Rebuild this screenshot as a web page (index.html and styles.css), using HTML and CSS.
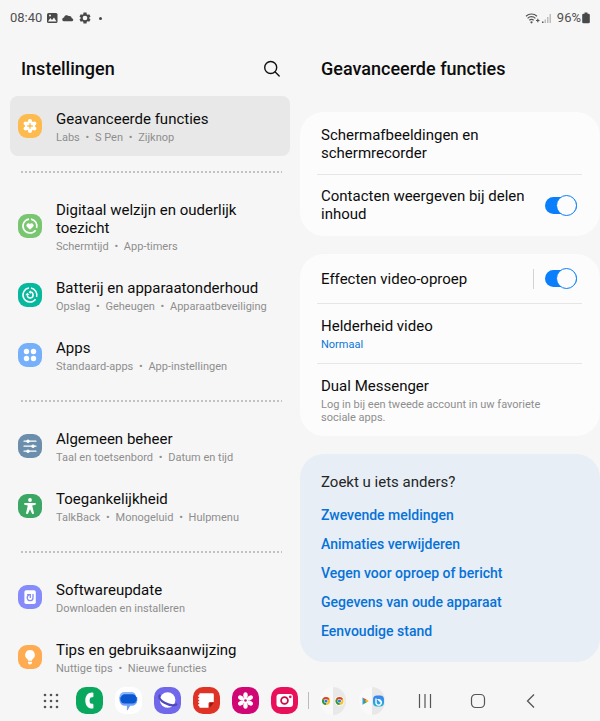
FILE: index.html
```html
<!DOCTYPE html>
<html lang="nl">
<head>
<meta charset="utf-8">
<meta name="viewport" content="width=device-width, initial-scale=1">
<title>Instellingen</title>
<link rel="stylesheet" href="styles.css">
</head>
<body>
<div class="screen">
  <header class="status">
    <span>08:40</span>
    <svg class="status-icon" viewBox="0 0 12 12" width="12" height="12" aria-hidden="true"><rect x="1" y="1" width="10.500" height="10" rx="1.500" fill="#484848"/><path d="M2 9.500 4.300 6l1.700 2 2-2.600 2.500 4.100z" fill="#f6f6f6"/><circle cx="4" cy="3.600" r="1" fill="#f6f6f6"/></svg>
    <svg class="status-icon" viewBox="0 0 12 12" width="12" height="12" aria-hidden="true"><path d="M2.200 9.300a1.900 1.900 0 0 1-.1-3.800A2.600 2.600 0 0 1 6.600 4a2.700 2.700 0 0 1 3.200 2.200 1.600 1.600 0 0 1 .4 3.100z" fill="#484848"/></svg>
    <svg class="status-icon" viewBox="0 0 24 24" width="14" height="14" aria-hidden="true"><path fill="#484848" fill-rule="evenodd" d="M19.400 13a7.500 7.500 0 0 0 0-2l2.100-1.600-2.300-4-2.500 1a7.500 7.500 0 0 0-1.700-1L14.600 2.500H9.400L9 5.400a7.500 7.500 0 0 0-1.700 1l-2.500-1-2.300 4L4.600 11a7.500 7.500 0 0 0 0 2l-2.100 1.600 2.300 4 2.500-1a7.500 7.500 0 0 0 1.700 1l.4 2.900h5.200l.4-2.900a7.500 7.500 0 0 0 1.700-1l2.500 1 2.300-4zM12 16a4 4 0 1 1 0-8 4 4 0 0 1 0 8z"/></svg>
    <span class="status-dot"></span>
    <span class="status-right">
      <svg viewBox="0 0 15 12" width="15" height="12" aria-hidden="true"><g fill="none" stroke="#555" stroke-width="1.200"><path d="M1 4.200a8 8 0 0 1 11 0"/><path d="M2.600 6.300a5.500 5.500 0 0 1 7.800 0"/><path d="M4.300 8.300a3.200 3.200 0 0 1 4.400 0"/><path d="M11 8.500h3.500M12.800 6.800v3.400"/></g><circle cx="6.500" cy="10.300" r="1.100" fill="#555"/></svg>
      <svg viewBox="0 0 11 12" width="11" height="12" aria-hidden="true"><path fill="#555" d="M1 9.500h1.500V11H1z"/><path fill="#bdbdbd" d="M3.500 7.500H5V11H3.500zM6 5h1.500v6H6zM8.500 2H10v9H8.500z"/></svg>
      <span class="battery-text">96%</span>
      <svg viewBox="0 0 8 12" width="8" height="12" aria-hidden="true"><path fill="#484848" d="M2.500.5h3v1.200h1A1.300 1.300 0 0 1 7.800 3v7a1.300 1.300 0 0 1-1.300 1.300h-5A1.300 1.300 0 0 1 .2 10V3a1.300 1.300 0 0 1 1.300-1.300h1z"/></svg>
    </span>
  </header>

  <main class="panes">
    <nav class="pane" aria-label="Instellingen">
      <div class="pane-head menu-head">
        <h1>Instellingen</h1>
        <button class="search" aria-label="Zoeken"><svg viewBox="0 0 18 18" width="18" height="18" aria-hidden="true"><g fill="none" stroke="#111" stroke-width="1.400" stroke-linecap="round"><circle cx="7.700" cy="7.500" r="6"/><path d="m12.200 12 4 4"/></g></svg></button>
      </div>

      <a class="item selected" href="#functies">
        <svg class="icon" viewBox="0 0 24 24" aria-hidden="true"><rect width="24" height="24" rx="9" fill="#fdbb4f"/><g fill="#fff"><circle cx="12" cy="12" r="5"/><circle cx="12" cy="7" r="2"/><circle cx="12" cy="17" r="2"/><circle cx="7.600" cy="9.500" r="2"/><circle cx="16.400" cy="9.500" r="2"/><circle cx="7.600" cy="14.500" r="2"/><circle cx="16.400" cy="14.500" r="2"/></g><path d="M12 9.200v5.600M9.200 12h5.600" stroke="#fdbb4f" stroke-width="1.400"/></svg>
        <span class="label"><span class="title">Geavanceerde functies</span><span class="sub">Labs <i>•</i> S Pen <i>•</i> Zijknop</span></span>
      </a>
      <hr>
      <a class="item" href="#welzijn">
        <svg class="icon" viewBox="0 0 24 24" aria-hidden="true"><rect width="24" height="24" rx="9" fill="#79c671"/><g fill="none" stroke="#fff" stroke-width="1.600"><path d="M13 5.100A7 7 0 0 1 18.600 14"/><path d="M17.600 16.200A7 7 0 1 1 11 5.100"/></g><path d="M12 15.800 8.900 12.700a2 2 0 0 1 3.100-2.700 2 2 0 0 1 3.100 2.700z" fill="#fff"/></svg>
        <span class="label"><span class="title">Digitaal welzijn en ouderlijk toezicht</span><span class="sub">Schermtijd <i>•</i> App-timers</span></span>
      </a>
      <a class="item" href="#batterij">
        <svg class="icon" viewBox="0 0 24 24" aria-hidden="true"><rect width="24" height="24" rx="9" fill="#06b89d"/><g fill="none" stroke="#fff" stroke-width="1.500"><path d="M13 5.100A7 7 0 0 1 18.600 14"/><path d="M17.600 16.200A7 7 0 1 1 11 5.100"/><path d="M9.300 12.200a2.900 2.900 0 1 0 2.700-3.100"/></g><path d="m7.300 12.300 2-2.600 2.300 2.400zM12.800 7.300v3.600l-2.300-1.700z" fill="#fff"/></svg>
        <span class="label"><span class="title">Batterij en apparaatonderhoud</span><span class="sub">Opslag <i>•</i> Geheugen <i>•</i> Apparaatbeveiliging</span></span>
      </a>
      <a class="item" href="#apps">
        <svg class="icon" viewBox="0 0 24 24" aria-hidden="true"><rect width="24" height="24" rx="9" fill="#76b0fb"/><g fill="#fff"><circle cx="8.500" cy="8.500" r="2.700"/><circle cx="15.500" cy="8.500" r="2.700"/><circle cx="8.500" cy="15.500" r="2.700"/><circle cx="15.500" cy="15.500" r="2.700"/></g></svg>
        <span class="label"><span class="title">Apps</span><span class="sub">Standaard-apps <i>•</i> App-instellingen</span></span>
      </a>
      <hr>
      <a class="item" href="#beheer">
        <svg class="icon" viewBox="0 0 24 24" aria-hidden="true"><rect width="24" height="24" rx="9" fill="#6b8ead"/><path d="M6 7.200h12M6 12.200h12M6 17.200h12" stroke="#fff" stroke-width="1.200" stroke-linecap="round"/><g fill="#fff"><circle cx="10" cy="7.200" r="1.700"/><circle cx="15" cy="12.200" r="1.700"/><circle cx="10" cy="17.200" r="1.700"/></g></svg>
        <span class="label"><span class="title">Algemeen beheer</span><span class="sub">Taal en toetsenbord <i>•</i> Datum en tijd</span></span>
      </a>
      <a class="item" href="#toegankelijkheid">
        <svg class="icon" viewBox="0 0 24 24" aria-hidden="true"><rect width="24" height="24" rx="9" fill="#3ca664"/><circle cx="12" cy="6" r="1.900" fill="#fff"/><path d="M6.300 9h11.400v1.700l-3.500.8 1.900 8.200-1.900.4L12 15.200 9.800 20.100l-1.900-.4 1.900-8.200-3.500-.8z" fill="#fff"/></svg>
        <span class="label"><span class="title">Toegankelijkheid</span><span class="sub">TalkBack <i>•</i> Monogeluid <i>•</i> Hulpmenu</span></span>
      </a>
      <hr>
      <a class="item" href="#update">
        <svg class="icon" viewBox="0 0 24 24" aria-hidden="true"><rect width="24" height="24" rx="9" fill="#868bfb"/><rect x="6.400" y="5.200" width="11.400" height="13.800" rx="1.800" fill="#fff"/><g fill="none" stroke="#868bfb" stroke-width="1.300"><path d="M11.300 10A2.900 2.900 0 1 0 15 12.500V9"/><path d="M9 9.700h3.300V13"/></g></svg>
        <span class="label"><span class="title">Softwareupdate</span><span class="sub">Downloaden en installeren</span></span>
      </a>
      <a class="item" href="#tips">
        <svg class="icon" viewBox="0 0 24 24" aria-hidden="true"><rect width="24" height="24" rx="9" fill="#feab51"/><path d="M12 5a4.900 4.900 0 0 0-2.800 8.900c.6.5.8 1.100.9 1.800h3.800c.1-.7.3-1.300.9-1.800A4.900 4.900 0 0 0 12 5zM10 16.700h4v.9a2 2 0 0 1-4 0z" fill="#fff"/></svg>
        <span class="label"><span class="title">Tips en gebruiksaanwijzing</span><span class="sub">Nuttige tips <i>•</i> Nieuwe functies</span></span>
      </a>
    </nav>

    <section class="pane" id="functies">
      <div class="pane-head detail-head"><h2>Geavanceerde functies</h2></div>

      <div class="card">
        <div class="row"><span class="title">Schermafbeeldingen en schermrecorder</span></div>
        <div class="row switch-row">
          <label class="title" for="contacten">Contacten weergeven bij delen inhoud</label>
          <input class="switch" type="checkbox" role="switch" id="contacten" checked>
        </div>
      </div>

      <div class="card">
        <div class="row switch-row">
          <label class="title" for="effecten">Effecten video-oproep</label>
          <span class="switch-rule"></span>
          <input class="switch" type="checkbox" role="switch" id="effecten" checked>
        </div>
        <div class="row"><span class="title">Helderheid video</span><span class="sub value">Normaal</span></div>
        <div class="row"><span class="title">Dual Messenger</span><span class="sub">Log in bij een tweede account in uw favoriete sociale apps.</span></div>
      </div>

      <div class="card related">
        <h3>Zoekt u iets anders?</h3>
        <a href="#meldingen">Zwevende meldingen</a>
        <a href="#animaties">Animaties verwijderen</a>
        <a href="#vegen">Vegen voor oproep of bericht</a>
        <a href="#gegevens">Gegevens van oude apparaat</a>
        <a href="#stand">Eenvoudige stand</a>
      </div>
    </section>
  </main>

  <footer class="taskbar">
    <button aria-label="Alle apps"><svg viewBox="0 0 16 16" width="16" height="16"><g fill="#555"><circle cx="2" cy="2" r="1.300"/><circle cx="8" cy="2" r="1.300"/><circle cx="14" cy="2" r="1.300"/><circle cx="2" cy="8" r="1.300"/><circle cx="8" cy="8" r="1.300"/><circle cx="14" cy="8" r="1.300"/><circle cx="2" cy="14" r="1.300"/><circle cx="8" cy="14" r="1.300"/><circle cx="14" cy="14" r="1.300"/></g></svg></button>
    <button aria-label="Telefoon"><svg viewBox="0 0 27 27" width="27" height="27"><rect width="27" height="27" rx="10" fill="#0aa75e"/><path d="M16.600 5.500c-4.600-.3-7.300 3-7.300 8s2.700 8.400 7.300 8.100c.5 0 .8-.4.800-.9v-3c0-.5-.4-.8-.9-.9l-2-.2c-1.200-1.500-1.200-4.700 0-6.200l2-.2c.5 0 .9-.4.900-.9v-3c0-.4-.3-.8-.8-.8z" fill="#fff"/></svg></button>
    <button aria-label="Berichten"><svg viewBox="0 0 27 27" width="27" height="27"><rect width="27" height="27" rx="10" fill="#fff"/><path d="M9.500 5h7a4.500 4.500 0 0 1 4.400 4.500V12H4.500V9.500A4.800 4.800 0 0 1 9.500 5z" fill="#8ab4fb"/><path d="M4.500 10h17.800v3.500a5.500 5.500 0 0 1-5.500 5.300h-1.600L12.800 23c-.4.500-.9.300-.9-.3v-3.900H10a5.500 5.500 0 0 1-5.500-5.500z" fill="#70a3f7"/><rect x="5.300" y="7.300" width="16.600" height="9.300" rx="4.600" fill="#0b57d0"/></svg></button>
    <button aria-label="Internet"><svg viewBox="0 0 27 27" width="27" height="27"><rect width="27" height="27" rx="10" fill="#7067ea"/><circle cx="13.600" cy="13" r="7.800" fill="#fff"/><path d="M5.500 8.500c-1 2.500 1.500 5.300 5 7.300 4.200 2.300 9 3.200 11.800 1.700" fill="none" stroke="#5147bd" stroke-width="2.200" stroke-linecap="round"/></svg></button>
    <button aria-label="Notities"><svg viewBox="0 0 27 27" width="27" height="27"><rect width="27" height="27" rx="10" fill="#df3325"/><path d="M7.500 6.300h12a1.300 1.300 0 0 1 1.300 1.300V15H17a1.500 1.500 0 0 0-1.500 1.500v4.200h-8A1.300 1.300 0 0 1 6.200 19.400V7.600a1.300 1.300 0 0 1 1.300-1.300z" fill="#fff"/><path d="M5.700 9h2M5.700 12h2M5.700 15h2M5.700 18h2" stroke="#fff" stroke-width="1.600" stroke-linecap="round"/><path d="M16.500 20.700V17a1 1 0 0 1 1-1h3.300z" fill="#8f1d18"/></svg></button>
    <button aria-label="Galerij"><svg viewBox="0 0 27 27" width="27" height="27"><rect width="27" height="27" rx="10" fill="#cf0673"/><g fill="#fff"><ellipse cx="13.500" cy="8.200" rx="2.200" ry="3"/><ellipse cx="13.500" cy="8.200" rx="2.200" ry="3" transform="rotate(60 13.500 13.500)"/><ellipse cx="13.500" cy="8.200" rx="2.200" ry="3" transform="rotate(120 13.500 13.500)"/><ellipse cx="13.500" cy="8.200" rx="2.200" ry="3" transform="rotate(180 13.500 13.500)"/><ellipse cx="13.500" cy="8.200" rx="2.200" ry="3" transform="rotate(240 13.500 13.500)"/><ellipse cx="13.500" cy="8.200" rx="2.200" ry="3" transform="rotate(300 13.500 13.500)"/><circle cx="13.500" cy="13.500" r="3"/></g><circle cx="13.500" cy="13.500" r="1.300" fill="#cf0673"/></svg></button>
    <button aria-label="Camera"><svg viewBox="0 0 27 27" width="27" height="27"><rect width="27" height="27" rx="10" fill="#e8105a"/><rect x="5.500" y="7" width="16.500" height="13" rx="3" fill="#fff"/><circle cx="13.500" cy="13.500" r="3.400" fill="none" stroke="#c80c4a" stroke-width="1.800"/><circle cx="19.300" cy="9.800" r="1.400" fill="#e8105a"/></svg></button>
    <span class="task-rule"></span>
    <button aria-label="Chrome en Chrome"><svg viewBox="0 0 28 28" width="28" height="28"><path d="M13 0A13 14 0 0 0 13 28z" fill="#f9f9f9"/><path d="M13 0a13 14 0 0 1 0 28z" fill="#e8e8e8"/><g id="chrome"><circle cx="6" cy="14" r="4" fill="#fbc116"/><path d="M6 14 2.500 12A4 4 0 0 1 9.500 12z" fill="#e33b2e"/><path d="M6 14 2.500 12A4 4 0 0 0 6 18z" fill="#229a4b"/><circle cx="6" cy="14" r="2.100" fill="#fff"/><circle cx="6" cy="14" r="1.600" fill="#3478e5"/></g><circle cx="19.500" cy="14" r="4.800" fill="#fff"/><use href="#chrome" x="13.500"/></svg></button>
    <button aria-label="Play Store en Bixby"><svg viewBox="0 0 28 28" width="28" height="28"><path d="M13 0A13 14 0 0 0 13 28z" fill="#f9f9f9"/><path d="M13 0a13 14 0 0 1 0 28z" fill="#e8e8e8"/><path d="M3.500 10.500 7 14l-3.500 3.700z" fill="#2d9fe0"/><path d="m3.500 10.500 4.200 2.200L6 14z" fill="#e8423a"/><path d="M7.700 12.500 9.700 14l-2 1.500L6 14z" fill="#f8b912"/><path d="M3.500 17.700 7.700 15.300 6 14z" fill="#27a65a"/><defs><linearGradient id="bx" x2="0" y2="1"><stop stop-color="#3b7fee"/><stop offset="1" stop-color="#24b5dc"/></linearGradient></defs><rect x="14" y="8.500" width="11" height="11" rx="4" fill="url(#bx)"/><path d="M17 11.500V15a2.700 2.700 0 1 0 2.500-2.300l2.300 2.300" fill="none" stroke="#fff" stroke-width="1.400"/></svg></button>
    <div class="system-keys">
      <button aria-label="Recent"><svg viewBox="0 0 14 16" width="14" height="16"><path d="M1.500 1v14M7 1v14M12.500 1v14" stroke="#555" stroke-width="1.200"/></svg></button>
      <button aria-label="Startscherm"><svg viewBox="0 0 16 16" width="16" height="16"><rect x="1.500" y="1.500" width="13" height="13" rx="4" fill="none" stroke="#555" stroke-width="1.200"/></svg></button>
      <button aria-label="Terug"><svg viewBox="0 0 16 16" width="16" height="16"><path d="m11 1.500-6.500 6.500 6.500 6.500" fill="none" stroke="#555" stroke-width="1.300"/></svg></button>
    </div>
  </footer>
</div>
</body>
</html>
```
FILE: styles.css
```css
* { box-sizing: border-box; }

body {
  margin: 0;
  background: #f6f6f6;
  color: #0c0c0c;
  font-family: Roboto, "Liberation Sans", sans-serif;
  font-size: 15px;
  line-height: 18px;
}

h1, h2, h3 { margin: 0; font-weight: 500; }
a { color: inherit; text-decoration: none; }
button { border: 0; padding: 0; background: none; display: grid; place-items: center; cursor: pointer; }
svg { display: block; }

.screen { display: flex; flex-direction: column; height: 100vh; }

.status {
  display: flex;
  align-items: center;
  gap: 4px;
  height: 36px;
  flex: none;
  padding: 0 10px;
  color: #505050;
  font-size: 13px;
}
.status-dot { width: 3px; height: 3px; margin-left: 3px; border-radius: 50%; background: #484848; }
.status-right { display: flex; align-items: center; gap: 1px; margin-left: auto; }
.battery-text { margin-left: 4px; }

.panes {
  display: grid;
  grid-template-columns: 1fr 1fr;
  flex: 1;
  min-height: 0;
}
.pane { min-height: 0; overflow-y: auto; scrollbar-width: none; }

.pane-head { display: flex; align-items: center; justify-content: space-between; padding: 6px 18px 0 21px; }
.pane-head h1, .pane-head h2 { font-size: 18px; line-height: 24px; }
.menu-head { height: 60px; }
.detail-head { height: 76px; padding-bottom: 16px; }
.search { width: 20px; height: 20px; }

.item {
  display: flex;
  align-items: center;
  gap: 14px;
  margin: 0 10px;
  padding: 12px 16px 12px 8px;
  border-radius: 8px;
}
.item.selected { background: #e8e8e8; }
.icon { width: 24px; height: 24px; flex: none; }
.label { padding-top: 2px; }
.title, .sub { display: block; }
.sub { margin-top: 3px; color: #8e8e8e; font-size: 11px; line-height: 13px; }
.sub i { margin: 0 3px; font-style: normal; }

hr {
  height: 2px;
  margin: 15px 18px 14px 21px;
  border: 0;
  background: repeating-linear-gradient(to right, #c2c2c2 0 2px, transparent 2px 4px);
}

.card { margin-bottom: 18px; border-radius: 24px; background: #fcfcfc; }
.row { position: relative; padding: 14px 23px 12px 21px; }
.row + .row::before {
  content: "";
  position: absolute;
  top: 0;
  left: 17px;
  right: 18px;
  height: 1px;
  background: #e6e6e6;
}
.switch-row { display: flex; align-items: center; min-height: 49px; padding-top: 13px; padding-bottom: 13px; }
.switch-row .title { flex: 1; padding-right: 12px; }
.switch-rule { width: 1px; height: 20px; margin-right: 11px; background: #d4d4d4; }
.sub.value { color: #0b76d8; }

.switch {
  appearance: none;
  display: flex;
  align-items: center;
  justify-content: flex-end;
  width: 32px;
  height: 17px;
  margin: 0;
  border-radius: 9px;
  background: #0a7efb;
}
.switch::before {
  content: "";
  width: 19px;
  height: 19px;
  flex: none;
  border: 1px solid #0a7efb;
  border-radius: 50%;
  background: #fcfcfc;
}
.switch:not(:checked) { justify-content: flex-start; background: #9a9a9a; }

.related {
  display: flex;
  flex-direction: column;
  align-items: flex-start;
  gap: 11px;
  margin-bottom: 0;
  padding: 19px 21px 22px;
  background: #e7eef5;
}
.related h3 { margin-bottom: 4px; color: #252525; font-size: 15px; font-weight: 400; }
.related a { color: #0672d8; font-size: 14px; font-weight: 500; }

.taskbar { display: flex; align-items: center; flex: none; height: 41px; padding-left: 31px; }
.taskbar > button { width: 39px; height: 41px; }
.task-rule { width: 1px; height: 17px; margin: 0 5px 0 4px; background: #bbb; }
.system-keys { display: flex; margin-left: 6px; }
.system-keys button { width: 53px; height: 41px; }
```
